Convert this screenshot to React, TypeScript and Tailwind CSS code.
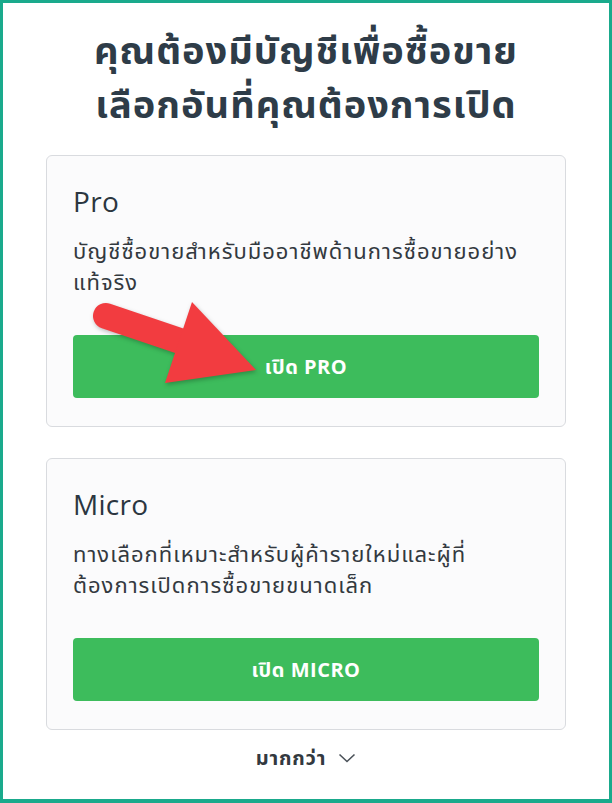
const FONT = "font-['Open_Sans','Noto_Sans_Thai','Noto_Sans',sans-serif]";

type Plan = {
  name: string;
  desc: string[];
  cta: string;
};

const PLANS: Plan[] = [
  {
    name: "Pro",
    desc: ["บัญชีซื้อขายสำหรับมืออาชีพด้านการซื้อขายอย่าง", "แท้จริง"],
    cta: "เปิด PRO",
  },
  {
    name: "Micro",
    desc: ["ทางเลือกที่เหมาะสำหรับผู้ค้ารายใหม่และผู้ที่", "ต้องการเปิดการซื้อขายขนาดเล็ก"],
    cta: "เปิด MICRO",
  },
];

function PlanCard({ plan }: { plan: Plan }) {
  return (
    <div className="mx-auto w-[520px] h-[272px] flex flex-col border border-[#d9dbdf] rounded-md bg-[#fbfbfc] px-[26px] pt-[28px] pb-[28px]">
      <div className="text-[28px] leading-[34px] tracking-[0.3px] text-[#2b3640]">{plan.name}</div>
      <p className="mt-[17px] text-[22px] leading-[31px] tracking-[1px] text-[#33393f]">
        {plan.desc.map((line) => (
          <span key={line} className="block">
            {line}
          </span>
        ))}
      </p>
      <button className="mt-auto h-[63px] w-full rounded bg-[#3dbc5c] text-[20px] font-bold tracking-[0.5px] text-white">
        {plan.cta}
      </button>
    </div>
  );
}

// red call-out arrow drawn over the Pro button
function Arrow() {
  return (
    <svg
      className="absolute left-0 top-0 pointer-events-none drop-shadow-[1px_2px_2px_rgba(0,0,0,0.25)]"
      width={612}
      height={803}
      viewBox="0 0 612 803"
    >
      <line x1={106} y1={316} x2={180} y2={341} stroke="#f23c40" strokeWidth={26} strokeLinecap="round" />
      <polygon points="192,302 256,370 165,383" fill="#f23c40" />
    </svg>
  );
}

export default function App() {
  return (
    <div className={`relative w-[612px] h-[803px] ${FONT}`}>
      <div className="h-full border-[3px] border-b-4 border-[#1aaa8c] bg-white">
        <h1 className="pt-[19px] text-center text-[38px] font-bold leading-[54px] tracking-[1px] text-[#2e3c48]">
          คุณต้องมีบัญชีเพื่อซื้อขาย
          <br />
          เลือกอันที่คุณต้องการเปิด
        </h1>
        <div className="mt-[25px] flex flex-col gap-[31px]">
          {PLANS.map((p) => (
            <PlanCard key={p.name} plan={p} />
          ))}
        </div>
        <div className="mt-[13px] flex items-center justify-center gap-[12px] text-[20px] font-bold tracking-[0.8px] text-[#33393f]">
          <span>มากกว่า</span>
          <svg width={18} height={10} viewBox="0 0 18 10" fill="none" stroke="#4a5158" strokeWidth={1.6}>
            <path d="M1.5 1.5l7.5 7 7.5-7" />
          </svg>
        </div>
      </div>
      <Arrow />
    </div>
  );
}
